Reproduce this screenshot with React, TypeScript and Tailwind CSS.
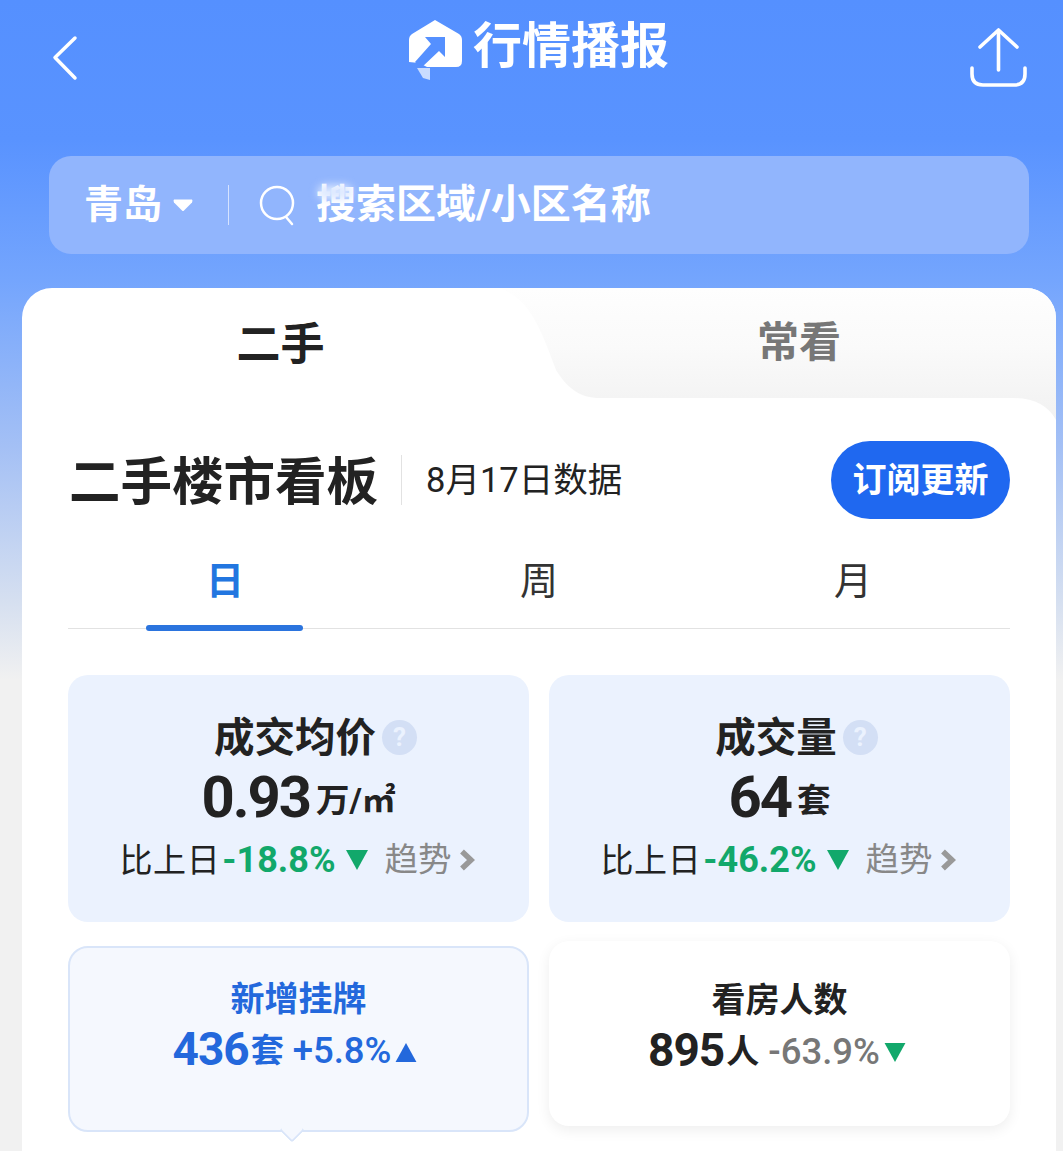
import React from "react";

function Tri({ up = false, className = "" }: { up?: boolean; className?: string }) {
  return (
    <svg viewBox="0 0 22 20" className={className} fill="currentColor">
      {up ? <path d="M11 0 L22 20 H0 Z" /> : <path d="M0 0 H22 L11 20 Z" />}
    </svg>
  );
}

function Chevron() {
  return (
    <svg viewBox="0 0 16 22" className="w-[16px] h-[22px] ml-[7px] text-[#999999]" fill="none" stroke="currentColor" strokeWidth="5.5">
      <path d="M3 2.5 L12 11 L3 19.5" />
    </svg>
  );
}

function MainCard({ title, value, unit, pct }: { title: string; value: string; unit: React.ReactNode; pct: string }) {
  return (
    <div className="h-[247px] rounded-[20px] bg-[#ebf2fe] flex flex-col items-center pt-[38px] text-[#222222]">
      <div className="h-[50px] flex items-center -ml-[7px]">
        <span className="relative text-[40.5px] font-bold leading-none">
          {title}
          <span className="absolute left-full top-[2px] ml-[6px] w-[35px] h-[35px] rounded-full bg-[#d3dff5] text-[#ebf2fe] flex items-center justify-center text-[26px] leading-none font-bold">
            ?
          </span>
        </span>
      </div>
      <div className="h-[60px] mt-[4px] flex items-center">
        <span className="text-[58px] font-bold leading-none tracking-[-2px]">{value}</span>
        <span className="text-[33.5px] font-bold leading-none ml-[6px] mt-[7px]">{unit}</span>
      </div>
      <div className="h-[46px] mt-[10px] -ml-[3px] flex items-center">
        <span className="text-[33px] leading-none tracking-[0.6px]">比上日</span>
        <span className="text-[36px] font-bold leading-none text-[#12a86b] ml-[2px]">{pct}</span>
        <Tri className="w-[22px] h-[20px] ml-[10px] text-[#12a86b]" />
        <span className="text-[33.5px] leading-none text-[#888888] ml-[17px]">趋势</span>
        <Chevron />
      </div>
    </div>
  );
}

export default function App() {
  return (
    <div className="relative w-[1063px] h-[1151px] overflow-hidden flex flex-col [font-family:Roboto,Noto_Sans_CJK_SC,sans-serif] bg-[linear-gradient(180deg,#5590ff_0px,#5993ff_140px,#74a5fd_280px,#a4c0f5_447px,#d5dff0_600px,#f1f1f1_680px)]">
      {/* header */}
      <header className="relative h-[156px] shrink-0">
        <div className="flex items-start justify-between pl-[50px] pr-[34px] pt-[26px]">
          <svg viewBox="0 0 30 50" className="w-[30px] h-[50px] mt-[6px] text-white" fill="none" stroke="currentColor" strokeWidth="3.5" strokeLinecap="round" strokeLinejoin="round">
            <path d="M25 6 L5 25.5 L25 46" />
          </svg>
          <svg viewBox="0 0 60 60" className="w-[60px] h-[60px] mt-[2px] text-white" fill="none" stroke="currentColor" strokeWidth="3.6" strokeLinecap="round" strokeLinejoin="round">
            <path d="M11 19 L29.5 2 L48 19" />
            <path d="M29.5 3 V42" />
            <path d="M3 40 V46 Q3 57 14 57 H45 Q56 57 56 46 V40" />
          </svg>
        </div>
        <div className="absolute left-[404px] top-[16px] flex items-center">
          <svg viewBox="0 0 62 68" className="w-[62px] h-[68px]">
            <path d="M31 4 L55 18 Q58 20 58 24 V45 Q58 51 52 51 H23 L15 47 L5 46 V24 Q5 20 8 18 Z" fill="#fff" />
            <path d="M21 21 H41 V41 L35 35 L17 52 L11 46 L27 28 Z" fill="#5590ff" />
            <path d="M13 52 H26 V64 L19 62 Z" fill="#c9dcff" />
          </svg>
          <span className="ml-[7px] -mt-[8px] text-[49px] font-bold leading-none text-white">行情播报</span>
        </div>
      </header>

      {/* search */}
      <div className="mx-[49px] w-[980px] h-[98px] shrink-0 rounded-[22px] bg-[#91b5fd] flex items-center text-white pl-[35px]">
        <span className="text-[39px] font-bold leading-none">青岛</span>
        <svg viewBox="0 0 20 12" className="w-[20px] h-[13px] ml-[11px]" fill="#fff">
          <path d="M1 0 H19 Q20 1 19 3 L11 11 Q10 12 9 11 L1 3 Q0 1 1 0 Z" />
        </svg>
        <span className="w-px h-[40px] bg-[#d6e3ff] ml-[35px]" />
        <svg viewBox="0 0 38 42" className="w-[38px] h-[42px] ml-[30px]" fill="none" stroke="#fff" strokeWidth="2.5" strokeLinecap="round">
          <circle cx="18" cy="19" r="16" />
          <path d="M27 33 L33 40" />
        </svg>
        <span className="relative ml-[19px] text-[40px] font-bold leading-none">
          搜索区域/小区名称
          <span className="absolute left-[2px] top-[0px] w-[34px] h-[14px] rounded-full bg-[#dce8ff] blur-[4px]" />
        </span>
      </div>

      {/* card */}
      <main className="relative mt-[34px] ml-[22px] w-[1034px] flex-1 rounded-t-[30px] overflow-hidden bg-white">
        <svg viewBox="0 0 1034 132" className="absolute left-0 top-0 w-[1034px] h-[132px]">
          <defs>
            <linearGradient id="tabg" x1="0" y1="0" x2="0" y2="1">
              <stop offset="0" stopColor="#fefefe" />
              <stop offset="0.45" stopColor="#fafafa" />
              <stop offset="0.83" stopColor="#f4f4f4" />
              <stop offset="1" stopColor="#f2f2f2" />
            </linearGradient>
          </defs>
          <path d="M477 0 C505 10 516 32 534 82 C545 100 558 110 578 110 H991 Q1022 110 1034 132 V0 Z" fill="url(#tabg)" />
        </svg>
        <div className="relative flex h-[110px]">
          <div className="w-1/2 flex items-center justify-center text-[44px] font-bold leading-none text-[#222222] pt-[4px]">二手</div>
          <div className="w-1/2 flex items-center justify-center text-[42px] font-bold leading-none text-[#777777] pl-[3px]">常看</div>
        </div>

        <div className="relative px-[46px]">
          {/* title */}
          <div className="flex items-center h-[78px] mt-[43px]">
            <h1 className="text-[51.5px] font-bold leading-none text-[#222222] ml-[1px] pt-[6px]">二手楼市看板</h1>
            <span className="w-px h-[50px] bg-[#e2e2e2] ml-[23px]" />
            <span className="text-[34.5px] leading-none text-[#222222] ml-[24px]">8月17日数据</span>
            <button className="ml-auto w-[179px] h-[78px] rounded-full bg-[#1f68f0] text-white text-[34px] font-bold leading-none">订阅更新</button>
          </div>

          {/* period tabs */}
          <div className="grid grid-cols-3 h-[110px] border-b border-[#e2e2e2] text-[38px] leading-none">
            <div className="relative flex items-center justify-center pt-[15px] text-[#2276e0] font-bold">
              日
              <span className="absolute bottom-[-3px] left-[78px] w-[157px] h-[6px] rounded-full bg-[#2b74de]" />
            </div>
            <div className="flex items-center justify-center pt-[15px] text-[#333333]">周</div>
            <div className="flex items-center justify-center pt-[15px] text-[#333333]">月</div>
          </div>

          {/* metrics */}
          <div className="grid grid-cols-2 gap-x-[20px] mt-[46px]">
            <MainCard title="成交均价" value="0.93" unit="万/㎡" pct="-18.8%" />
            <MainCard title="成交量" value="64" unit="套" pct="-46.2%" />
          </div>
          <div className="grid grid-cols-2 gap-x-[20px] mt-[19px] items-start">
            <div className="relative mt-[5px] h-[186px] rounded-[20px] border-2 border-[#d9e5f9] bg-[#f5f8fe] flex flex-col items-center pt-[34px]">
              <span className="text-[34px] font-bold leading-none text-[#2368dc]">新增挂牌</span>
              <div className="flex items-center mt-[10px] -ml-[7px] text-[#2368dc]">
                <span className="text-[46px] font-bold leading-none tracking-[-1px]">436</span>
                <span className="text-[33px] font-bold leading-none ml-[2px] mt-[3px]">套</span>
                <span className="text-[36.5px] font-medium leading-none ml-[9px] mt-[4px]">+5.8%</span>
                <Tri up className="w-[22px] h-[19px] ml-[4px] mt-[6px]" />
              </div>
              <span className="absolute left-[213px] bottom-[-9px] w-[18px] h-[18px] rotate-45 rounded-[3px] border-r-2 border-b-2 border-[#d9e5f9] bg-[#f5f8fe]" />
            </div>
            <div className="h-[185px] rounded-[20px] bg-white shadow-[0_4px_14px_rgba(0,0,0,0.07)] flex flex-col items-center pt-[42px]">
              <span className="text-[34px] font-bold leading-none text-[#222222]">看房人数</span>
              <div className="flex items-center mt-[10px] -ml-[5px]">
                <span className="text-[46px] font-bold leading-none tracking-[-1px] text-[#222222]">895</span>
                <span className="text-[33px] font-bold leading-none ml-[2px] mt-[3px] text-[#222222]">人</span>
                <span className="text-[36.5px] font-medium leading-none ml-[9px] mt-[4px] text-[#777777]">-63.9%</span>
                <Tri className="w-[22px] h-[19px] ml-[4px] mt-[4px] text-[#12a86b]" />
              </div>
            </div>
          </div>
        </div>
      </main>
    </div>
  );
}
